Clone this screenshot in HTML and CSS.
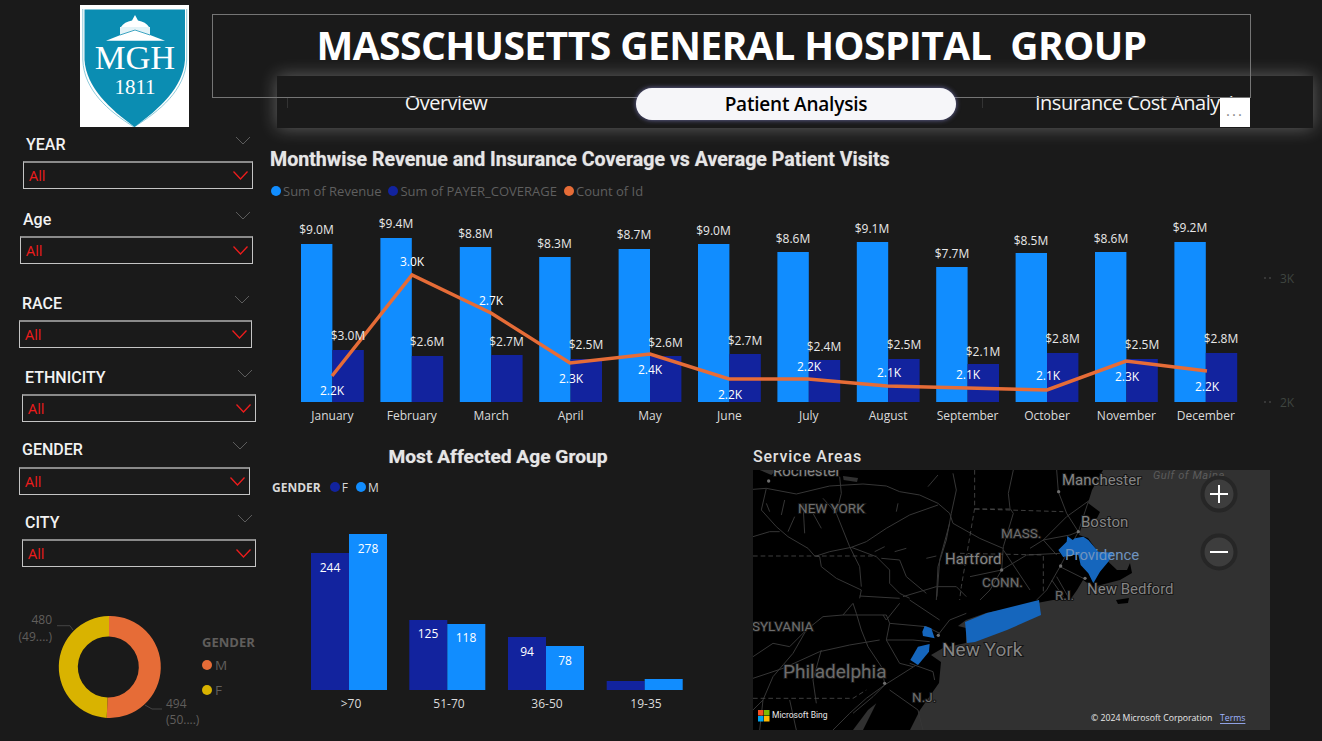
FILE: index.html
```html
<!DOCTYPE html>
<html lang="en">
<head>
    <meta charset="UTF-8">
    <meta name="viewport" content="width=device-width, initial-scale=1.0">
    <title>Massachusetts General Hospital Group</title>
    <link rel="stylesheet" href="styles.css">
</head>
<body>
<div class="page">
    <!-- Logo and report title -->
    <header class="header">
        <svg class="logo" viewBox="0 0 109 122">
            <rect width="109" height="122" fill="#fff"/>
            <path d="M2.800 4V55C4 85 28 106 54 122C80 106 105 85 106.700 55V4" fill="none" stroke="#5fb4cc" stroke-width=".7"/>
            <path d="M4.500 4.500H105V55C103 83 79 104 54.500 122C30 104 6.500 83 4.500 55Z" fill="#0b8db2"/>
            <path d="M55 10L58 15.500C63 16.500 67 18.500 69 22H41C43 18.500 47 16.500 52 15.500Z" fill="#fff"/>
            <rect x="40" y="22" width="30" height="9" fill="#e4f3f7"/>
            <path d="M26 35.700L55 24.300L85 35.700Z" fill="#fff"/>
            <path d="M40 30L55 25L70 30" fill="none" stroke="#0b8db2" stroke-width=".8"/>
            <text class="logo-mgh" x="55" y="64">MGH</text>
            <text class="logo-year" x="55" y="89">1811</text>
        </svg>
        <div class="title-box">
            <h1>MASSCHUSETTS GENERAL HOSPITAL&nbsp; GROUP</h1>
        </div>
    </header>

    <!-- Page navigator, sits over the bottom of the title box -->
    <nav class="nav">
        <span class="tick tick-first"></span>
        <span class="tab">Overview</span>
        <span class="tab tab-active">Patient Analysis</span>
        <span class="tick tick-second"></span>
        <span class="tab tab-last">Insurance Cost Analysis</span>
    </nav>
    <div class="more">···</div>

    <div class="body">
        <!-- Slicers and donut -->
        <aside class="side">
            <div class="slicer slicer-year">
                <div class="slicer-head"><span>YEAR</span><svg class="chev" viewBox="0 0 14 8"><path d="M0 0L7 7L14 0"/></svg></div>
                <div class="slicer-box"><span>All</span><svg class="chev-red" viewBox="0 0 15 9"><path d="M.5 .5L7.500 8L14.500 .5"/></svg></div>
            </div>
            <div class="slicer slicer-age">
                <div class="slicer-head"><span>Age</span><svg class="chev" viewBox="0 0 14 8"><path d="M0 0L7 7L14 0"/></svg></div>
                <div class="slicer-box"><span>All</span><svg class="chev-red" viewBox="0 0 15 9"><path d="M.5 .5L7.500 8L14.500 .5"/></svg></div>
            </div>
            <div class="slicer slicer-race">
                <div class="slicer-head"><span>RACE</span><svg class="chev" viewBox="0 0 14 8"><path d="M0 0L7 7L14 0"/></svg></div>
                <div class="slicer-box"><span>All</span><svg class="chev-red" viewBox="0 0 15 9"><path d="M.5 .5L7.500 8L14.500 .5"/></svg></div>
            </div>
            <div class="slicer slicer-ethnicity">
                <div class="slicer-head"><span>ETHNICITY</span><svg class="chev" viewBox="0 0 14 8"><path d="M0 0L7 7L14 0"/></svg></div>
                <div class="slicer-box"><span>All</span><svg class="chev-red" viewBox="0 0 15 9"><path d="M.5 .5L7.500 8L14.500 .5"/></svg></div>
            </div>
            <div class="slicer slicer-gender">
                <div class="slicer-head"><span>GENDER</span><svg class="chev" viewBox="0 0 14 8"><path d="M0 0L7 7L14 0"/></svg></div>
                <div class="slicer-box"><span>All</span><svg class="chev-red" viewBox="0 0 15 9"><path d="M.5 .5L7.500 8L14.500 .5"/></svg></div>
            </div>
            <div class="slicer slicer-city">
                <div class="slicer-head"><span>CITY</span><svg class="chev" viewBox="0 0 14 8"><path d="M0 0L7 7L14 0"/></svg></div>
                <div class="slicer-box"><span>All</span><svg class="chev-red" viewBox="0 0 15 9"><path d="M.5 .5L7.500 8L14.500 .5"/></svg></div>
            </div>

            <svg class="donut" viewBox="0 600 265 135">
                <path d="M109 616A51 51 0 1 1 106.700 717.900L107.600 697.500A30.500 30.500 0 1 0 109 636.500Z" fill="#e66c37"/>
                <path d="M106.700 717.900A51 51 0 0 1 109 616L109 636.500A30.500 30.500 0 0 0 107.600 697.500Z" fill="#d9b300"/>
                <path class="leader" d="M57 625.700H70L73 630"/>
                <path class="leader" d="M145 705L152 709H162"/>
                <text class="donut-label" x="52" y="619" text-anchor="end">480</text>
                <text class="donut-label" x="52" y="636" text-anchor="end">(49....)</text>
                <text class="donut-label" x="166" y="703">494</text>
                <text class="donut-label" x="166" y="719">(50....)</text>
                <text class="donut-title" x="202" y="642">GENDER</text>
                <circle cx="207" cy="665" r="5" fill="#e66c37"/>
                <text class="donut-key" x="215" y="665">M</text>
                <circle cx="207" cy="690" r="5" fill="#d9b300"/>
                <text class="donut-key" x="215" y="690">F</text>
            </svg>
        </aside>

        <main class="main">
            <!-- Revenue and coverage chart -->
            <h2 class="chart-title">Monthwise Revenue and Insurance Coverage vs Average Patient Visits</h2>
            <div class="legend">
                <span class="legend-item"><i class="dot dot-light"></i>Sum of Revenue</span>
                <span class="legend-item"><i class="dot dot-dark"></i>Sum of PAYER_COVERAGE</span>
                <span class="legend-item"><i class="dot dot-orange"></i>Count of Id</span>
            </div>
            <svg class="month-chart" viewBox="265 205 1057 225">
                <g class="bar-light">
                    <rect x="301" y="244" width="31.400" height="158"/>
                    <rect x="380.400" y="238" width="31.400" height="164"/>
                    <rect x="459.800" y="247" width="31.400" height="155"/>
                    <rect x="539.200" y="257" width="31.400" height="145"/>
                    <rect x="618.600" y="249" width="31.400" height="153"/>
                    <rect x="698" y="244" width="31.400" height="158"/>
                    <rect x="777.400" y="252" width="31.400" height="150"/>
                    <rect x="856.800" y="242" width="31.400" height="160"/>
                    <rect x="936.200" y="267" width="31.400" height="135"/>
                    <rect x="1015.600" y="253" width="31.400" height="149"/>
                    <rect x="1095" y="252" width="31.400" height="150"/>
                    <rect x="1174.400" y="242" width="31.400" height="160"/>
                </g>
                <g class="bar-dark">
                    <rect x="332.400" y="350" width="31.400" height="52"/>
                    <rect x="411.800" y="356" width="31.400" height="46"/>
                    <rect x="491.200" y="355" width="31.400" height="47"/>
                    <rect x="570.600" y="359" width="31.400" height="43"/>
                    <rect x="650" y="356" width="31.400" height="46"/>
                    <rect x="729.400" y="354" width="31.400" height="48"/>
                    <rect x="808.800" y="360" width="31.400" height="42"/>
                    <rect x="888.200" y="359" width="31.400" height="43"/>
                    <rect x="967.600" y="364" width="31.400" height="38"/>
                    <rect x="1047" y="353" width="31.400" height="49"/>
                    <rect x="1126.400" y="359" width="31.400" height="43"/>
                    <rect x="1205.800" y="353" width="31.400" height="49"/>
                </g>
                <polyline class="trend" points="332,376 412,275 491,313 570,363 650,354 729,379 808,379 887,386 967,388 1047,390 1126,361 1207,371"/>
                <g class="val">
                    <text x="316.500" y="229">$9.0M</text><text x="396" y="223">$9.4M</text><text x="475.500" y="233">$8.8M</text><text x="554.500" y="243">$8.3M</text>
                    <text x="634" y="234">$8.7M</text><text x="713.500" y="230">$9.0M</text><text x="793" y="238">$8.6M</text><text x="872" y="228">$9.1M</text>
                    <text x="952" y="253">$7.7M</text><text x="1031" y="240">$8.5M</text><text x="1111" y="238">$8.6M</text><text x="1190" y="227">$9.2M</text>
                    <text x="348" y="335">$3.0M</text><text x="427" y="341">$2.6M</text><text x="506.500" y="341">$2.7M</text><text x="586" y="344">$2.5M</text>
                    <text x="665.500" y="342">$2.6M</text><text x="745" y="340">$2.7M</text><text x="824" y="346">$2.4M</text><text x="904" y="344">$2.5M</text>
                    <text x="983" y="351">$2.1M</text><text x="1062.500" y="338">$2.8M</text><text x="1142" y="344">$2.5M</text><text x="1221" y="338">$2.8M</text>
                </g>
                <g class="val val-white">
                    <text x="332" y="390">2.2K</text><text x="412" y="261">3.0K</text><text x="491" y="300">2.7K</text><text x="571" y="378">2.3K</text>
                    <text x="650" y="369">2.4K</text><text x="730" y="394">2.2K</text><text x="809" y="366">2.2K</text><text x="889" y="372">2.1K</text>
                    <text x="968" y="374">2.1K</text><text x="1048" y="375">2.1K</text><text x="1127" y="376">2.3K</text><text x="1207" y="386">2.2K</text>
                </g>
                <g class="axis-x">
                    <text x="332.400" y="415">January</text><text x="411.800" y="415">February</text><text x="491.200" y="415">March</text><text x="570.600" y="415">April</text>
                    <text x="650" y="415">May</text><text x="729.400" y="415">June</text><text x="808.800" y="415">July</text><text x="888.200" y="415">August</text>
                    <text x="967.600" y="415">September</text><text x="1047" y="415">October</text><text x="1126.400" y="415">November</text><text x="1205.800" y="415">December</text>
                </g>
                <g class="axis-y">
                    <text x="1280" y="278">3K</text><text x="1280" y="402">2K</text>
                    <path class="axis-dash" d="M1264 278h2M1269 278h2M1264 402h2M1269 402h2"/>
                </g>
            </svg>

            <div class="lower">
                <!-- Age group chart -->
                <section class="age">
                    <h2 class="chart-title age-title">Most Affected Age Group</h2>
                    <div class="age-legend">
                        <b>GENDER</b>
                        <span class="legend-item"><i class="dot dot-dark"></i>F</span>
                        <span class="legend-item"><i class="dot dot-light"></i>M</span>
                    </div>
                    <svg class="age-chart" viewBox="265 500 475 220">
                        <g class="bar-dark">
                            <rect x="311" y="553" width="38" height="137"/>
                            <rect x="409.300" y="620" width="38" height="70"/>
                            <rect x="508" y="637" width="38" height="53"/>
                            <rect x="606.700" y="681" width="38" height="9"/>
                        </g>
                        <g class="bar-light">
                            <rect x="349" y="534" width="38" height="156"/>
                            <rect x="447.300" y="624" width="38" height="66"/>
                            <rect x="546" y="646" width="38" height="44"/>
                            <rect x="644.700" y="679" width="38" height="11"/>
                        </g>
                        <g class="val val-white">
                            <text x="330" y="567">244</text><text x="368" y="548">278</text><text x="428" y="633">125</text>
                            <text x="466" y="637">118</text><text x="527" y="651">94</text><text x="565" y="660">78</text>
                        </g>
                        <g class="axis-x">
                            <text x="351" y="703">&gt;70</text><text x="449" y="703">51-70</text><text x="547" y="703">36-50</text><text x="646" y="703">19-35</text>
                        </g>
                    </svg>
                </section>

                <!-- Service area map -->
                <section class="areas">
                    <h2 class="areas-title">Service Areas</h2>
                    <svg class="map" viewBox="0 0 517 260">
                        <rect width="517" height="260" fill="#313131"/>
                        <path fill="#000" d="M0 0H350L339 20L335 33L347 42L344 48L329 55L326 65L335 68L345 82L364 100L374 100L377 93L379 103L367 110L340 117L330 110L324 120L317 130L300 130L284 133L233 143L213 150L205 156L213 158L213 173L190 178L178 185L188 192L186 213L167 240L157 260H0Z"/>
                        <path fill="#000" d="M363 130L376 128L375 133L365 134Z"/>

                        <!-- North west part of the map -->
                        <g class="roads" transform="scale(.3333)">
                            <path class="lake" d="M270 18L315 24L312 36L272 30Z"/>
                            <path class="lake" d="M20 0L55 15L70 0Z"/>
                            <polyline points="0,58 40,55 130,72 230,48 330,42 400,48 440,65 500,75 555,100 590,130 600,160 680,205 750,235"/>
                            <polyline points="555,105 470,135 400,175 340,215 295,232 230,245 190,258"/>
                            <polyline points="40,55 25,120 70,170 105,200 165,235 185,258 200,260 205,290 250,325 325,360 320,385"/>
                            <polyline points="0,200 50,185 80,185"/>
                            <polyline points="250,130 290,230 320,290 325,350"/>
                            <polyline points="295,232 370,260 410,300 410,340 440,370 470,385"/>
                            <polyline points="385,265 440,270 460,320 520,370"/>
                            <polyline points="600,10 610,60 595,130 580,210 555,290 550,390"/>
                            <polyline points="590,160 560,270 552,380"/>
                            <polyline points="260,20 265,70 250,130"/>
                            <polyline points="450,380 550,350 610,350 640,380"/>
                            <polyline points="320,378 440,385"/>
                            <polyline points="95,90 85,135"/>
                            <polyline points="125,140 105,185"/>
                            <polyline points="150,100 155,190"/>
                            <polyline points="180,130 205,175"/>
                            <polyline points="210,85 250,130"/>
                            <polyline points="40,100 50,125"/>
                            <polyline points="435,100 430,125"/>
                            <polyline points="365,245 395,230"/>
                            <polyline points="425,245 460,235"/>
                            <polyline points="520,265 550,258"/>
                            <polyline points="525,50 555,15"/>
                            <polyline class="border" points="0,258 370,258"/>
                            <polyline class="border" points="665,0 665,115 625,350 620,390"/>
                            <polyline class="border" points="665,117 780,117"/>
                            <circle class="town" cx="47" cy="33" r="5"/>
                        </g>

                        <!-- North east part of the map -->
                        <g class="roads" transform="translate(207 0) scale(.3333)">
                            <polyline points="160,0 145,70 150,115 160,130 130,230 125,300 90,360 60,390"/>
                            <polyline points="210,235 250,210 330,195 355,185"/>
                            <polyline points="295,65 290,0"/>
                            <polyline points="295,65 320,130 355,185"/>
                            <polyline points="355,185 385,95"/>
                            <polyline points="250,210 320,140 390,90"/>
                            <polyline points="355,185 300,290 260,360 230,390"/>
                            <polyline points="125,300 200,255 300,250"/>
                            <polyline points="30,320 125,300"/>
                            <polyline points="250,210 290,255"/>
                            <polyline points="130,240 170,300 210,360"/>
                            <polyline points="300,290 370,325"/>
                            <polyline points="275,330 310,380"/>
                            <polyline points="290,320 330,390"/>
                            <polyline class="border" points="45,117 310,125"/>
                            <polyline class="border" points="0,250 250,255 250,370"/>
                            <circle class="town" cx="296" cy="65" r="5"/>
                            <circle class="town" cx="355" cy="185" r="5"/>
                            <circle class="town" cx="125" cy="300" r="5"/>
                            <circle class="town" cx="302" cy="288" r="5"/>
                            <circle class="town" cx="375" cy="325" r="5"/>
                            <path class="area-shape" d="M295 240L320 215L322 198L338 210L345 205L370 200L385 210L415 245L460 248L445 275L420 305L400 340L385 310L362 285L355 255L325 255L310 262Z"/>
                        </g>

                        <!-- South part of the map -->
                        <g class="roads" transform="translate(0 130) scale(.3333)">
                            <path class="bay" d="M300 390L345 330L370 310L350 350L330 390Z"/>
                            <polyline points="300,10 310,40 325,90 345,140 385,200 395,250"/>
                            <polyline points="270,45 400,45 410,70 520,80 560,100"/>
                            <polyline points="410,70 400,120 480,120 530,125"/>
                            <polyline points="160,90 120,160 60,230 30,300 0,330"/>
                            <polyline points="0,235 90,205 200,155 290,135 380,120"/>
                            <polyline points="205,150 180,240 190,310"/>
                            <polyline points="400,120 440,190 480,200"/>
                            <polyline points="490,195 395,255 340,295 290,340 240,390"/>
                            <polyline points="395,255 360,290 300,340"/>
                            <polyline points="410,270 495,330 510,390"/>
                            <polyline points="470,190 540,215 545,240"/>
                            <polyline points="30,300 20,390"/>
                            <polyline points="110,300 130,390"/>
                            <polyline points="555,105 590,60 640,40"/>
                            <polyline points="440,10 400,60 390,45"/>
                            <polyline points="470,0 560,60"/>
                            <polyline points="0,170 60,130 110,140 160,90 210,50 270,45 300,10"/>
                            <polyline class="border" points="0,295 300,295 340,270"/>
                            <circle class="town" cx="395" cy="250" r="5"/>
                            <circle class="town" cx="556" cy="106" r="5"/>
                            <path class="area-shape" d="M515 78L535 85L545 115L530 112L510 108L508 95Z"/>
                            <path class="area-shape" d="M495 140L530 132L528 155L495 195L472 180Z"/>
                        </g>
                        <path class="area-shape" d="M212 152L234 143L286 130L288 145L254 160L222 172L214 173Z"/>

                        <g class="place">
                            <text x="20" y="1">Rochester</text>
                            <text x="45" y="38" class="place-caps">NEW YORK</text>
                            <text x="309" y="10">Manchester</text>
                            <text x="400" y="5" class="place-sea">Gulf of Maine</text>
                            <text x="328" y="52">Boston</text>
                            <text x="248" y="63" class="place-caps">MASS.</text>
                            <text x="192" y="89">Hartford</text>
                            <text x="312" y="85" class="place-tint">Providence</text>
                            <text x="229" y="112" class="place-caps">CONN.</text>
                            <text x="302" y="125" class="place-caps">R.I.</text>
                            <text x="334" y="119">New Bedford</text>
                            <text x="-1" y="156" class="place-caps">SYLVANIA</text>
                            <text x="189" y="179" class="place-big">New York</text>
                            <text x="30" y="201" class="place-big place-dim">Philadelphia</text>
                            <text x="159" y="227" class="place-caps">N.J.</text>
                        </g>
                        <circle class="zoom-ring" cx="466" cy="24" r="16.500"/>
                        <circle class="zoom-ring" cx="466" cy="82" r="16.500"/>
                        <path class="zoom-mark" d="M457 24H475M466 15V33M457 82H475"/>
                        <rect x="5" y="240" width="5.500" height="5.500" fill="#f25022"/>
                        <rect x="11" y="240" width="5.500" height="5.500" fill="#7fba00"/>
                        <rect x="5" y="246" width="5.500" height="5.500" fill="#00a4ef"/>
                        <rect x="11" y="246" width="5.500" height="5.500" fill="#ffb900"/>
                        <text class="map-note" x="19" y="245">Microsoft Bing</text>
                        <text class="map-copy" x="338" y="248">© 2024 Microsoft Corporation</text>
                        <text class="map-terms" x="467" y="248">Terms</text>
                    </svg>
                </section>
            </div>
        </main>
    </div>
</div>
</body>
</html>
```

FILE: styles.css
```css
/* Page canvas */
body {
    margin: 0;
    background-color: #1a1a1a;
    font-family: "Open Sans", "Noto Sans", sans-serif;
}

.page {
    position: relative;
    width: 1322px;
    height: 741px;
    overflow: hidden;
    background-color: #1a1a1a;
}

/* Header */
.header {
    display: flex;
    height: 127px;
    padding-left: 80px;
    box-sizing: border-box;
    padding-top: 5px;
}

.logo {
    width: 109px;
    height: 122px;
    flex-shrink: 0;
}

.logo-mgh {
    font: 34.500px "Liberation Serif", serif;
    fill: #fff;
    text-anchor: middle;
}

.logo-year {
    font: 21px "Liberation Serif", serif;
    fill: #fff;
    text-anchor: middle;
}

.title-box {
    position: relative;
    z-index: 1;
    box-sizing: border-box;
    width: 1039px;
    height: 84px;
    margin: 9px 0 0 23px;
    border: 1px solid #757575;
    text-align: center;
}

h1 {
    margin: 7px 0 0;
    color: #fff;
    font-size: 39px;
    line-height: 46px;
    font-weight: 700;
    letter-spacing: -0.55px;
}

/* Page navigator */
.nav {
    position: absolute;
    left: 277px;
    top: 76px;
    display: flex;
    gap: 30px;
    box-sizing: border-box;
    width: 1036px;
    height: 52px;
    padding: 12px 0 0 9px;
    background-color: #1a1a1a;
    box-shadow: 0 0 18px rgba(255, 255, 255, 0.32);
}

.tab {
    position: relative;
    width: 320px;
    height: 32px;
    color: #f5f5f5;
    font-size: 20px;
    line-height: 30px;
    letter-spacing: -0.5px;
    text-align: center;
}

.tab-active {
    z-index: 2;
    border-radius: 16px;
    background-color: #f6f6f9;
    color: #000;
    font-size: 19px;
    font-weight: 600;
    line-height: 33px;
    letter-spacing: -0.2px;
    box-shadow: 0 0 5px rgba(130, 130, 200, 0.8);
}

.tab-last {
    box-sizing: border-box;
    width: 278px;
    margin-left: 2px;
    padding-left: 47px;
    overflow: hidden;
    text-align: left;
    white-space: nowrap;
}

.tick {
    position: absolute;
    top: 21px;
    width: 1px;
    height: 11px;
    background-color: #333;
}

.tick-first {
    left: 10px;
}

.tick-second {
    left: 705px;
}

/* White options box over the navigator */
.more {
    position: absolute;
    left: 1220px;
    top: 98px;
    z-index: 3;
    width: 30px;
    height: 29px;
    background-color: #fff;
    color: #888;
    font-size: 15px;
    line-height: 32px;
    letter-spacing: 2px;
    text-align: center;
}

/* Body below the header */
.body {
    display: flex;
}

.side {
    width: 265px;
    flex-shrink: 0;
    padding-top: 8px;
}

/* Slicers */
.slicer-head {
    display: flex;
    justify-content: space-between;
    height: 26px;
    padding: 0 3px 0 3px;
    color: #f2f2f2;
    font-family: Roboto, sans-serif;
    font-size: 16px;
    font-weight: 500;
    line-height: 19px;
}

.chev {
    width: 14px;
    height: 8px;
    margin-top: 2px;
    fill: none;
    stroke: #5c5c5c;
}

.slicer-box {
    display: flex;
    justify-content: space-between;
    align-items: center;
    box-sizing: border-box;
    height: 28px;
    padding: 0 4px 0 5px;
    border: 1px solid #c4c4c4;
    border-top: 2px solid #8a8a8a;
    color: #ee1c1c;
    font-size: 14.500px;
}

.chev-red {
    width: 15px;
    height: 9px;
    fill: none;
    stroke: #ee1c1c;
    stroke-width: 1.3;
}

.slicer-year {
    width: 230px;
    margin-left: 23px;
}

.slicer-age {
    width: 233px;
    margin: 21px 0 0 20px;
}

.slicer-race {
    width: 233px;
    margin: 30px 0 0 19px;
}

.slicer-ethnicity {
    width: 234px;
    margin: 20px 0 0 22px;
}

.slicer-ethnicity .slicer-head {
    padding-right: 4px;
}

.slicer-gender {
    width: 231px;
    margin: 18px 0 0 19px;
}

.slicer-gender .slicer-head {
    height: 27px;
}

.slicer-city {
    width: 234px;
    margin: 18px 0 0 22px;
}

.slicer-city .slicer-head {
    padding-right: 4px;
}

/* Donut */
.donut {
    display: block;
    width: 265px;
    height: 135px;
    margin-top: 33px;
}

.leader {
    fill: none;
    stroke: #444;
}

.donut-label {
    fill: #605e5c;
    font-size: 12px;
    dominant-baseline: central;
}

.donut-key {
    fill: #605e5c;
    font-size: 13.500px;
    dominant-baseline: central;
}

.donut-title {
    fill: #605e5c;
    font-size: 13px;
    font-weight: 700;
    dominant-baseline: central;
}

/* Main column */
.main {
    flex: 1;
    padding-top: 20px;
}

.chart-title {
    margin: 0 0 0 5px;
    color: #e6e6e6;
    font-family: Roboto, sans-serif;
    font-size: 19.600px;
    font-weight: 700;
    line-height: 26px;
    text-shadow: 0 0 1px rgba(255, 255, 255, 0.5);
}

.legend {
    display: flex;
    gap: 7px;
    height: 18px;
    margin: 9px 0 0 6px;
    color: #5f5f5f;
    font-size: 13px;
    line-height: 18px;
}

.legend-item {
    display: flex;
    align-items: center;
    gap: 2px;
}

.dot {
    width: 10px;
    height: 10px;
    border-radius: 50%;
}

.dot-light {
    background-color: #118dff;
}

.dot-dark {
    background-color: #12239e;
}

.dot-orange {
    background-color: #e66c37;
}

.month-chart {
    display: block;
    width: 1057px;
    height: 225px;
    margin-top: 5px;
}

.bar-light {
    fill: #118dff;
}

.bar-dark {
    fill: #12239e;
}

.trend {
    fill: none;
    stroke: #e66c37;
    stroke-width: 3.500;
}

.val text {
    fill: #e8e8e8;
    font-size: 12px;
    text-anchor: middle;
    dominant-baseline: central;
}

.val-white text {
    fill: #fff;
}

.axis-x text {
    fill: #dadada;
    font-size: 12px;
    text-anchor: middle;
    dominant-baseline: central;
}

.axis-y text {
    fill: #3f4540;
    font-size: 12px;
    dominant-baseline: central;
}

.axis-dash {
    stroke: #555;
}

/* Lower row */
.lower {
    display: flex;
    margin-top: 13px;
}

.age {
    width: 488px;
}

.age-title {
    margin: 1px 22px 0 0;
    font-size: 19.200px;
    text-align: center;
}

.age-legend {
    display: flex;
    align-items: center;
    gap: 8px;
    height: 18px;
    margin: 8px 0 0 7px;
    color: #d8d8d8;
    font-size: 12px;
}

.age-legend b {
    margin-right: 1px;
}

.age-chart {
    display: block;
    width: 475px;
    height: 220px;
    margin-top: 4px;
}

.areas {
    width: 517px;
}

.areas-title {
    margin: 1px 0 0;
    color: #e0e0e0;
    font-family: Roboto, sans-serif;
    font-size: 16px;
    font-weight: 500;
    line-height: 26px;
    letter-spacing: 0.8px;
}

/* Map */
.map {
    display: block;
    width: 517px;
    height: 260px;
}

.roads polyline {
    fill: none;
    stroke: #363636;
    stroke-width: 3;
}

.roads .border {
    stroke: #4a4a4a;
    stroke-width: 2.500;
    stroke-dasharray: 14 9;
}

.lake,
.bay {
    fill: #313131;
}

.town {
    fill: #6e6e6e;
}

.area-shape {
    fill: #1566bd;
}

.place text {
    fill: #858585;
    stroke: #161616;
    stroke-width: 2px;
    paint-order: stroke;
    font-family: Roboto, sans-serif;
    font-size: 15px;
    dominant-baseline: central;
}

.place .place-caps {
    fill: #6e6e6e;
    font-size: 13.500px;
}

.place .place-big {
    font-size: 19px;
}

.place .place-dim {
    fill: #6c6c6c;
}

.place .place-tint {
    fill: #6f93bf;
    stroke: none;
}

.place .place-sea {
    fill: #5c5c5c;
    stroke: none;
    font-size: 11px;
    font-style: italic;
    letter-spacing: 0.6px;
}

.zoom-ring {
    fill: #3d3d3d;
    stroke: #262626;
    stroke-width: 4;
}

.zoom-mark {
    fill: none;
    stroke: #fff;
    stroke-width: 2;
}

.map-note {
    fill: #e8e8e8;
    font-family: Roboto, sans-serif;
    font-size: 8.500px;
    dominant-baseline: central;
}

.map-copy {
    fill: #e8e8e8;
    font-size: 8.700px;
    dominant-baseline: central;
}

.map-terms {
    fill: #9fb4ff;
    font-size: 8.700px;
    text-decoration: underline;
    dominant-baseline: central;
}
```
